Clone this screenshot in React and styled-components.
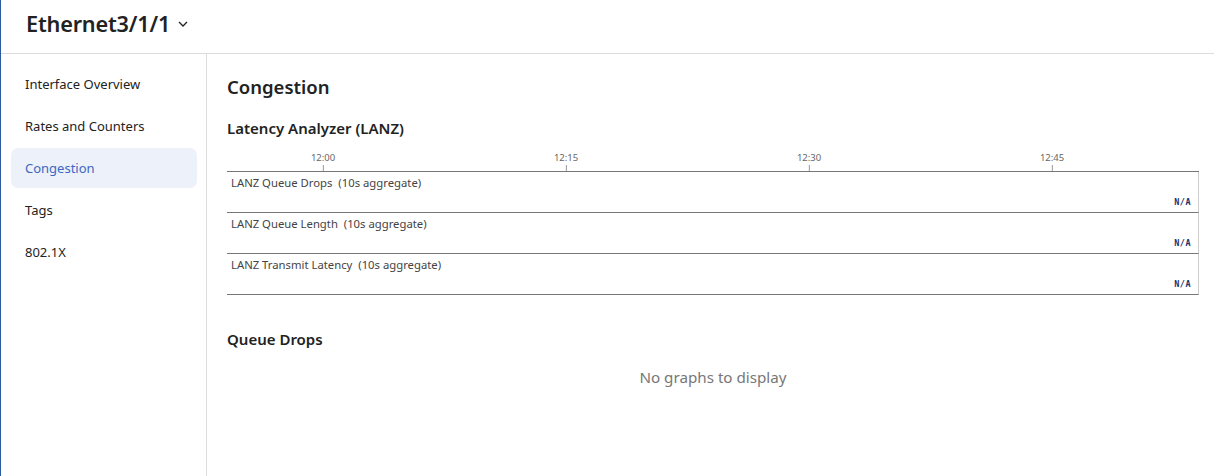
import React from "react";
import styled, { createGlobalStyle } from "styled-components";

const GlobalStyle = createGlobalStyle`
  html, body {
    margin: 0;
    padding: 0;
    background: #fff;
  }
  body {
    font-family: "Noto Sans", "Open Sans", sans-serif;
    color: #222;
  }
  * {
    box-sizing: border-box;
  }
`;

const Page = styled.div`
  height: 476px;
  display: flex;
  flex-direction: column;
  border-left: 1px solid #2b5aa0;
`;

const Header = styled.div`
  height: 54px;
  flex: none;
  display: flex;
  align-items: center;
  padding: 0 0 6px 25px;
  border-bottom: 1px solid #dcdcdc;
`;

const Title = styled.h1`
  margin: 0;
  font-size: 21.7px;
  font-weight: 600;
  color: #222;
  display: flex;
  align-items: center;
  gap: 7px;
  letter-spacing: -0.2px;
`;

const Body = styled.div`
  flex: 1;
  display: flex;
  min-height: 0;
`;

const Sidebar = styled.nav`
  width: 206px;
  flex: none;
  border-right: 1px solid #dcdcdc;
  padding: 10px 9px 0 10px;
  display: flex;
  flex-direction: column;
  gap: 2px;
`;

const NavItem = styled.div`
  height: 40px;
  display: flex;
  align-items: center;
  padding-left: 14px;
  border-radius: 7px;
  font-size: 13px;
  color: ${({ active }) => (active ? "#3a68c4" : "#222")};
  background: ${({ active }) => (active ? "#edf2fa" : "transparent")};
`;

const Main = styled.main`
  flex: 1;
  padding: 18px 15px 0 20px;
`;

const PageTitle = styled.h2`
  margin: 0;
  font-size: 18.5px;
  font-weight: 600;
  color: #222;
  line-height: 30px;
`;

const SectionTitle = styled.h3`
  margin: ${({ top }) => top || "15px"} 0 0;
  font-size: 15px;
  font-weight: 600;
  color: #222;
  line-height: 22px;
`;

const Chart = styled.div`
  margin-top: 13px;
`;

const Axis = styled.div`
  position: relative;
  height: 20px;
  border-bottom: 1px solid #777;
`;

const Tick = styled.div`
  position: absolute;
  bottom: 0;
  transform: translateX(-50%);
  display: flex;
  flex-direction: column;
  align-items: center;
  font-size: 9.5px;
  color: #666;
  line-height: 12px;

  &::after {
    content: "";
    width: 1px;
    height: 6px;
    background: #999;
    margin-top: 1px;
  }
`;

const Row = styled.div`
  height: 41px;
  border-bottom: 1px solid #777;
  border-right: 1px solid #ccc;
  display: flex;
  flex-direction: column;
  justify-content: space-between;
  padding: 4px 7px 5px 4px;
`;

const RowLabel = styled.div`
  font-size: 11.3px;
  color: #444;
  line-height: 14px;
`;

const NA = styled.div`
  align-self: flex-end;
  font-family: "DejaVu Sans Mono", "Liberation Mono", monospace;
  font-size: 8.5px;
  font-weight: 700;
  color: #1c2f6b;
  letter-spacing: 0.5px;
  line-height: 10px;
`;

const Empty = styled.div`
  text-align: center;
  font-size: 15.2px;
  color: #777;
  line-height: 22px;
  margin-top: 16px;
`;

const Chevron = () => (
  <svg width="12" height="12" viewBox="0 0 12 12" fill="none">
    <path d="M2 4l4 4 4-4" stroke="#222" strokeWidth="1.3" />
  </svg>
);

const navItems = [
  "Interface Overview",
  "Rates and Counters",
  "Congestion",
  "Tags",
  "802.1X",
];

const ticks = ["12:00", "12:15", "12:30", "12:45"];

const rows = [
  "LANZ Queue Drops",
  "LANZ Queue Length",
  "LANZ Transmit Latency",
];

export default function App() {
  return (
    <>
      <GlobalStyle />
      <Page>
        <Header>
          <Title>
            Ethernet3/1/1
            <Chevron />
          </Title>
        </Header>
        <Body>
          <Sidebar>
            {navItems.map(item => (
              <NavItem key={item} active={item === "Congestion"}>
                {item}
              </NavItem>
            ))}
          </Sidebar>
          <Main>
            <PageTitle>Congestion</PageTitle>
            <SectionTitle>Latency Analyzer (LANZ)</SectionTitle>
            <Chart>
              <Axis>
                {ticks.map((t, i) => (
                  <Tick key={t} style={{ left: `${9.88 + 25 * i}%` }}>
                    {t}
                  </Tick>
                ))}
              </Axis>
              {rows.map(r => (
                <Row key={r}>
                  <RowLabel>{r}&nbsp; (10s aggregate)</RowLabel>
                  <NA>N/A</NA>
                </Row>
              ))}
            </Chart>
            <SectionTitle top="33px">Queue Drops</SectionTitle>
            <Empty>No graphs to display</Empty>
          </Main>
        </Body>
      </Page>
    </>
  );
}
